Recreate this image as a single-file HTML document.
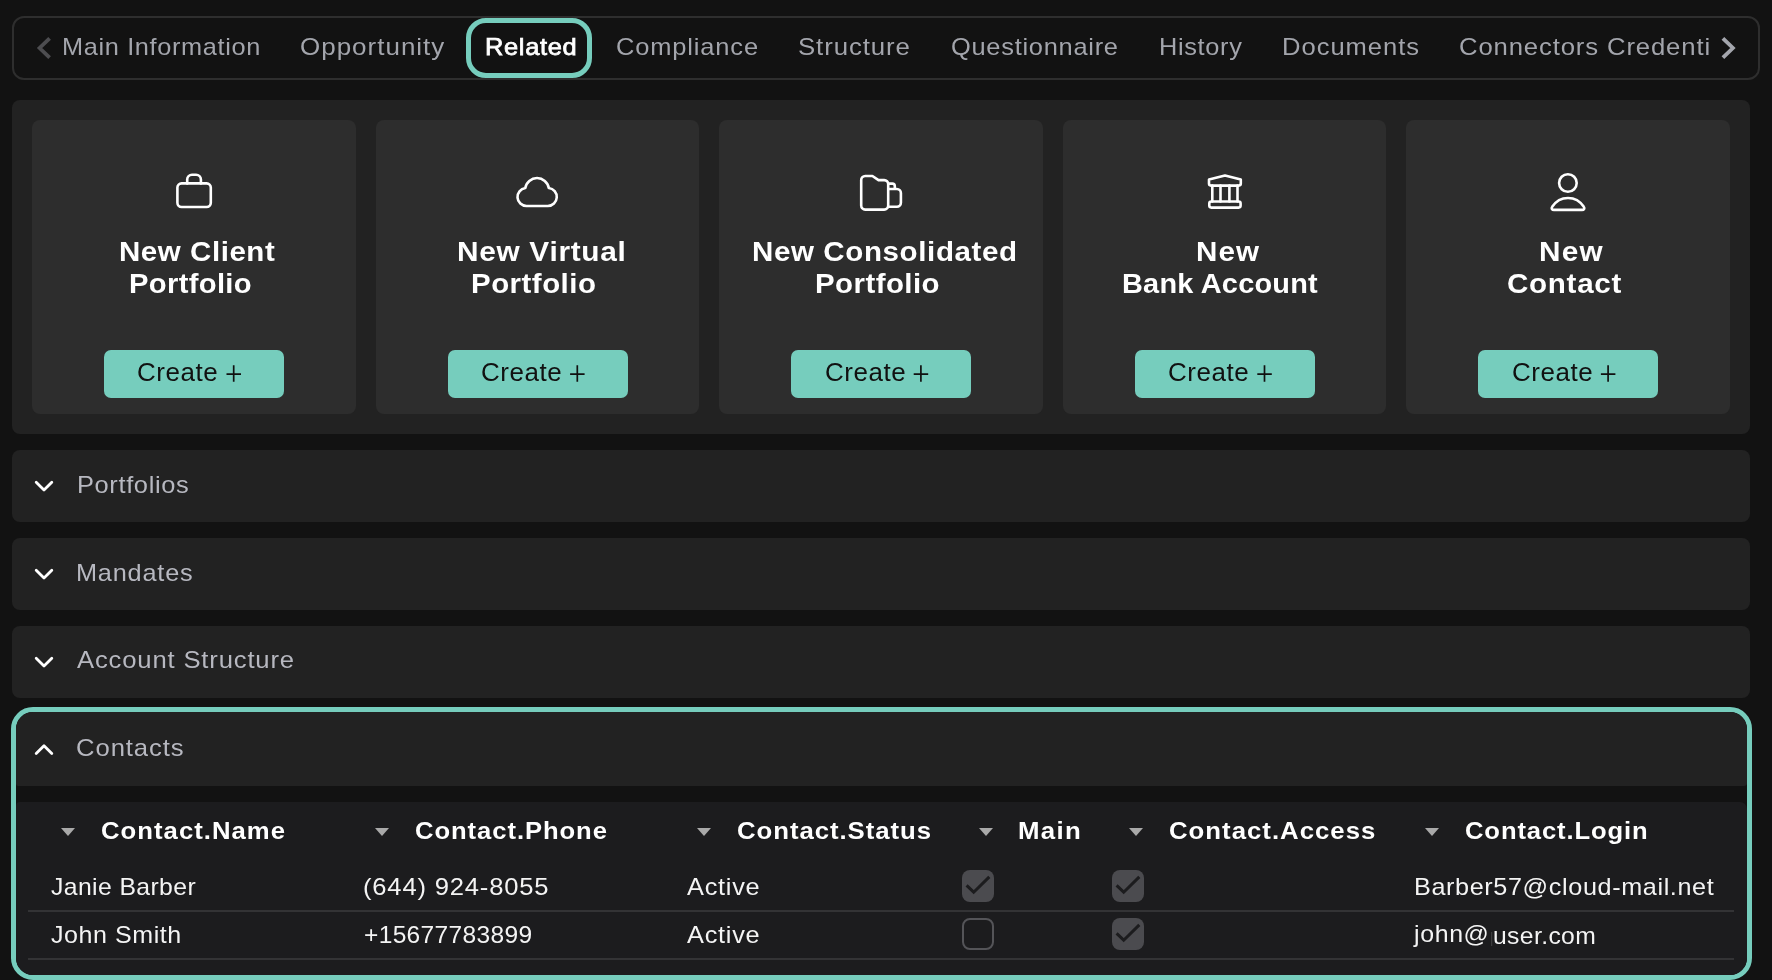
<!DOCTYPE html>
<html><head><meta charset="utf-8"><style>
html,body{margin:0;padding:0;}
body{width:1772px;height:980px;overflow:hidden;position:relative;background:#121212;font-family:"Liberation Sans",sans-serif;}
.a{position:absolute;box-sizing:border-box;}
.t{position:absolute;white-space:pre;will-change:transform;transform-origin:0 0;}
</style></head><body>
<div class="a" style="left:12px;top:16px;width:1748px;height:64px;border:2px solid #2e2e2e;border-radius:12px;"></div>
<div class="a" style="left:466px;top:18px;width:126px;height:60px;border:5px solid #76cdbd;border-radius:20px;"></div>
<div class="a" style="left:12px;top:100px;width:1738px;height:334px;background:#222222;border-radius:8px;"></div>
<div class="a" style="left:32.0px;top:120px;width:323.6px;height:294px;background:#2d2d2d;border-radius:8px;"></div>
<div class="a" style="left:104.0px;top:350px;width:180px;height:48px;background:#76cdbd;border-radius:7px;"></div>
<div class="a" style="left:375.6px;top:120px;width:323.6px;height:294px;background:#2d2d2d;border-radius:8px;"></div>
<div class="a" style="left:447.6px;top:350px;width:180px;height:48px;background:#76cdbd;border-radius:7px;"></div>
<div class="a" style="left:719.2px;top:120px;width:323.6px;height:294px;background:#2d2d2d;border-radius:8px;"></div>
<div class="a" style="left:791.2px;top:350px;width:180px;height:48px;background:#76cdbd;border-radius:7px;"></div>
<div class="a" style="left:1062.8px;top:120px;width:323.6px;height:294px;background:#2d2d2d;border-radius:8px;"></div>
<div class="a" style="left:1134.8px;top:350px;width:180px;height:48px;background:#76cdbd;border-radius:7px;"></div>
<div class="a" style="left:1406.4px;top:120px;width:323.6px;height:294px;background:#2d2d2d;border-radius:8px;"></div>
<div class="a" style="left:1478.4px;top:350px;width:180px;height:48px;background:#76cdbd;border-radius:7px;"></div>
<div class="a" style="left:12px;top:450px;width:1738px;height:72px;background:#222222;border-radius:8px;"></div>
<div class="a" style="left:12px;top:538px;width:1738px;height:72px;background:#222222;border-radius:8px;"></div>
<div class="a" style="left:12px;top:626px;width:1738px;height:72px;background:#222222;border-radius:8px;"></div>
<div class="a" style="left:11px;top:707px;width:1741px;height:273px;border:5px solid #76cdbd;border-radius:22px;background:#121212;overflow:hidden;"><div class="a" style="left:0;top:0;width:1731px;height:74px;background:#222222;border-radius:0 0 3px 2px;"></div><div class="a" style="left:0;top:90px;width:1731px;height:200px;background:#1c1c1e;border-radius:4px 7px 4px 4px;"></div></div>
<div class="a" style="left:28px;top:910px;width:1706px;height:2px;background:#333335;"></div>
<div class="a" style="left:28px;top:958px;width:1706px;height:2px;background:#333335;"></div>
<div class="a" style="left:962px;top:870px;width:32px;height:32px;background:#4b4b4f;border-radius:8px;"></div>
<div class="a" style="left:1112px;top:870px;width:32px;height:32px;background:#4b4b4f;border-radius:8px;"></div>
<div class="a" style="left:962px;top:918px;width:32px;height:32px;border:2px solid #545458;border-radius:8px;"></div>
<div class="a" style="left:1112px;top:918px;width:32px;height:32px;background:#4b4b4f;border-radius:8px;"></div>
<svg class="a" style="left:0;top:0" width="1772" height="980" viewBox="0 0 1772 980"><path d="M49.6 38.3 L39.6 48 L49.6 57.7" stroke="#4d4d50" stroke-width="3.8" fill="none"/><path d="M1722.9 38.3 L1732.9 48 L1722.9 57.7" stroke="#a4a6ad" stroke-width="3.8" fill="none"/><g transform="translate(166,165)" stroke="#ffffff" stroke-width="2.6" fill="none" stroke-linejoin="round" stroke-linecap="round"><rect x="11.4" y="18.4" width="33.4" height="23.6" rx="4.2"/><path d="M21.2 18.4 V14.5 A4.8 4.8 0 0 1 26 9.7 H30.1 A4.8 4.8 0 0 1 34.9 14.5 V18.4"/></g><g transform="translate(510,165)" stroke="#ffffff" stroke-width="2.6" fill="none" stroke-linejoin="round" stroke-linecap="round"><path d="M16.5 41 H37.8 A9 9 0 0 0 38.8 23.06 A11.9 11.9 0 0 0 15.3 23.08 A9 9 0 0 0 16.5 41 Z"/></g><g transform="translate(853,165)" stroke="#ffffff" stroke-width="2.6" fill="none" stroke-linejoin="round" stroke-linecap="round"><path d="M12.2 11 H19.4 L25.5 15.1 H31.2 A4 4 0 0 1 35.2 19.1 V40.6 A4 4 0 0 1 31.2 44.6 H12.2 A4 4 0 0 1 8.2 40.6 V15 A4 4 0 0 1 12.2 11 Z"/><path d="M35.2 18.6 H39.3 A2.5 2.5 0 0 1 41.8 21.1 V24 M35.2 24 H43.9 A4 4 0 0 1 47.9 28 V37.8 A4 4 0 0 1 43.9 41.8 H35.2"/></g><g transform="translate(1197,165)" stroke="#ffffff" stroke-width="2.6" fill="none" stroke-linejoin="round" stroke-linecap="round"><path d="M12 14.6 L28 10.6 L43.8 14.6 V18.6 A2 2 0 0 1 41.8 20.6 H14 A2 2 0 0 1 12 18.6 Z"/><path d="M15.3 20.6 V36.5 M23.5 20.6 V36.5 M32.4 20.6 V36.5 M40.5 20.6 V36.5"/><rect x="12.3" y="36.5" width="31.3" height="6.1" rx="2"/></g><g transform="translate(1540,165)" stroke="#ffffff" stroke-width="2.6" fill="none" stroke-linejoin="round" stroke-linecap="round"><circle cx="27.9" cy="18" r="8.8"/><path d="M14 44.9 H42 C44 44.9 45 43.5 43.8 41.8 C40 36 34.5 33 28 33 C21.5 33 16 36 12.2 41.8 C11 43.5 12 44.9 14 44.9 Z"/></g><path d="M36.2 482.2 L44 490.0 L51.8 482.2" stroke="#ffffff" stroke-width="2.8" fill="none" stroke-linecap="round" stroke-linejoin="round"/><path d="M36.2 570.2 L44 578.0 L51.8 570.2" stroke="#ffffff" stroke-width="2.8" fill="none" stroke-linecap="round" stroke-linejoin="round"/><path d="M36.2 658.2 L44 666.0 L51.8 658.2" stroke="#ffffff" stroke-width="2.8" fill="none" stroke-linecap="round" stroke-linejoin="round"/><path d="M36.2 753.6 L44 745.8 L51.8 753.6" stroke="#ffffff" stroke-width="2.8" fill="none" stroke-linecap="round" stroke-linejoin="round"/><path d="M61 828 H75 L68 836 Z" fill="#a9a9a9"/><path d="M375 828 H389 L382 836 Z" fill="#a9a9a9"/><path d="M697 828 H711 L704 836 Z" fill="#a9a9a9"/><path d="M979 828 H993 L986 836 Z" fill="#a9a9a9"/><path d="M1129 828 H1143 L1136 836 Z" fill="#a9a9a9"/><path d="M1425 828 H1439 L1432 836 Z" fill="#a9a9a9"/><path d="M966.6 885.4 L973.7 892.2 L989.3 876.9" stroke="#1c1c1e" stroke-width="3" fill="none"/><path d="M1116.6 885.4 L1123.7 892.2 L1139.3 876.9" stroke="#1c1c1e" stroke-width="3" fill="none"/><path d="M1116.6 933.4 L1123.7 940.2 L1139.3 924.9" stroke="#1c1c1e" stroke-width="3" fill="none"/><path d="M226.5 374.2 H241.0 M233.7 365.2 V381.7" stroke="#111111" stroke-width="1.7" fill="none"/><path d="M570.1 374.2 H584.6 M577.3 365.2 V381.7" stroke="#111111" stroke-width="1.7" fill="none"/><path d="M913.7 374.2 H928.2 M920.9 365.2 V381.7" stroke="#111111" stroke-width="1.7" fill="none"/><path d="M1257.3 374.2 H1271.8 M1264.5 365.2 V381.7" stroke="#111111" stroke-width="1.7" fill="none"/><path d="M1600.9 374.2 H1615.4 M1608.1 365.2 V381.7" stroke="#111111" stroke-width="1.7" fill="none"/><path d="M1491.7 932 V946" stroke="#444446" stroke-width="1"/></svg>
<div class="t" style="left:62.1px;top:34.8px;font-size:24px;line-height:24px;font-weight:400;color:#a3a5ac;letter-spacing:0.61px;transform:scaleX(1.0550)">Main Information</div>
<div class="t" style="left:299.6px;top:34.8px;font-size:24px;line-height:24px;font-weight:400;color:#a3a5ac;letter-spacing:0.93px;transform:scaleX(1.0822)">Opportunity</div>
<div class="t" style="left:484.7px;top:34.8px;font-size:24px;line-height:24px;font-weight:400;color:#ffffff;letter-spacing:0.64px;transform:scaleX(1.0599);-webkit-text-stroke:0.75px #ffffff">Related</div>
<div class="t" style="left:615.9px;top:34.8px;font-size:24px;line-height:24px;font-weight:400;color:#a3a5ac;letter-spacing:0.80px;transform:scaleX(1.0607)">Compliance</div>
<div class="t" style="left:798.4px;top:34.8px;font-size:24px;line-height:24px;font-weight:400;color:#a3a5ac;letter-spacing:0.84px;transform:scaleX(1.0754)">Structure</div>
<div class="t" style="left:950.6px;top:34.8px;font-size:24px;line-height:24px;font-weight:400;color:#a3a5ac;letter-spacing:0.69px;transform:scaleX(1.0588)">Questionnaire</div>
<div class="t" style="left:1158.5px;top:34.8px;font-size:24px;line-height:24px;font-weight:400;color:#a3a5ac;letter-spacing:0.64px;transform:scaleX(1.0552)">History</div>
<div class="t" style="left:1281.6px;top:34.8px;font-size:24px;line-height:24px;font-weight:400;color:#a3a5ac;letter-spacing:0.92px;transform:scaleX(1.0649)">Documents</div>
<div class="t" style="left:1459.1px;top:34.8px;font-size:24px;line-height:24px;font-weight:400;color:#a3a5ac;letter-spacing:0.80px;transform:scaleX(1.0708)">Connectors Credenti</div>
<div class="t" style="left:118.9px;top:237.1px;font-size:28.5px;line-height:28.5px;font-weight:700;color:#ffffff;letter-spacing:0.54px;transform:scaleX(1.0344)">New Client</div>
<div class="t" style="left:128.8px;top:268.8px;font-size:28.5px;line-height:28.5px;font-weight:700;color:#ffffff;letter-spacing:0.33px;transform:scaleX(1.0236)">Portfolio</div>
<div class="t" style="left:457.0px;top:237.1px;font-size:28.5px;line-height:28.5px;font-weight:700;color:#ffffff;letter-spacing:0.67px;transform:scaleX(1.0459)">New Virtual</div>
<div class="t" style="left:470.8px;top:268.8px;font-size:28.5px;line-height:28.5px;font-weight:700;color:#ffffff;letter-spacing:0.47px;transform:scaleX(1.0335)">Portfolio</div>
<div class="t" style="left:752.2px;top:237.1px;font-size:28.5px;line-height:28.5px;font-weight:700;color:#ffffff;letter-spacing:0.58px;transform:scaleX(1.0366)">New Consolidated</div>
<div class="t" style="left:814.8px;top:268.8px;font-size:28.5px;line-height:28.5px;font-weight:700;color:#ffffff;letter-spacing:0.45px;transform:scaleX(1.0318)">Portfolio</div>
<div class="t" style="left:1195.6px;top:237.1px;font-size:28.5px;line-height:28.5px;font-weight:700;color:#ffffff;letter-spacing:1.08px;transform:scaleX(1.0382)">New</div>
<div class="t" style="left:1121.6px;top:268.8px;font-size:28.5px;line-height:28.5px;font-weight:700;color:#ffffff;letter-spacing:0.23px;transform:scaleX(1.0136)">Bank Account</div>
<div class="t" style="left:1538.9px;top:237.1px;font-size:28.5px;line-height:28.5px;font-weight:700;color:#ffffff;letter-spacing:1.21px;transform:scaleX(1.0434)">New</div>
<div class="t" style="left:1506.6px;top:268.8px;font-size:28.5px;line-height:28.5px;font-weight:700;color:#ffffff;letter-spacing:0.66px;transform:scaleX(1.0389)">Contact</div>
<div class="t" style="left:137.3px;top:359.9px;font-size:25px;line-height:25px;font-weight:400;color:#111111;letter-spacing:0.54px;transform:scaleX(1.0381)">Create</div>
<div class="t" style="left:480.9px;top:359.9px;font-size:25px;line-height:25px;font-weight:400;color:#111111;letter-spacing:0.54px;transform:scaleX(1.0381)">Create</div>
<div class="t" style="left:824.5px;top:359.9px;font-size:25px;line-height:25px;font-weight:400;color:#111111;letter-spacing:0.54px;transform:scaleX(1.0381)">Create</div>
<div class="t" style="left:1168.1px;top:359.9px;font-size:25px;line-height:25px;font-weight:400;color:#111111;letter-spacing:0.54px;transform:scaleX(1.0381)">Create</div>
<div class="t" style="left:1511.7px;top:359.9px;font-size:25px;line-height:25px;font-weight:400;color:#111111;letter-spacing:0.54px;transform:scaleX(1.0381)">Create</div>
<div class="t" style="left:76.6px;top:472.5px;font-size:24px;line-height:24px;font-weight:400;color:#b7b8c0;letter-spacing:0.61px;transform:scaleX(1.0583)">Portfolios</div>
<div class="t" style="left:75.7px;top:560.9px;font-size:24px;line-height:24px;font-weight:400;color:#b7b8c0;letter-spacing:0.76px;transform:scaleX(1.0536)">Mandates</div>
<div class="t" style="left:76.8px;top:648.4px;font-size:24px;line-height:24px;font-weight:400;color:#b7b8c0;letter-spacing:0.77px;transform:scaleX(1.0688)">Account Structure</div>
<div class="t" style="left:75.7px;top:736.0px;font-size:24px;line-height:24px;font-weight:400;color:#b7b8c0;letter-spacing:0.86px;transform:scaleX(1.0688)">Contacts</div>
<div class="t" style="left:100.8px;top:818.5px;font-size:24px;line-height:24px;font-weight:700;color:#ffffff;letter-spacing:0.96px;transform:scaleX(1.0701)">Contact.Name</div>
<div class="t" style="left:414.8px;top:818.5px;font-size:24px;line-height:24px;font-weight:700;color:#ffffff;letter-spacing:0.88px;transform:scaleX(1.0669)">Contact.Phone</div>
<div class="t" style="left:736.9px;top:818.5px;font-size:24px;line-height:24px;font-weight:700;color:#ffffff;letter-spacing:0.88px;transform:scaleX(1.0728)">Contact.Status</div>
<div class="t" style="left:1017.9px;top:818.5px;font-size:24px;line-height:24px;font-weight:700;color:#ffffff;letter-spacing:1.24px;transform:scaleX(1.0754)">Main</div>
<div class="t" style="left:1168.5px;top:818.5px;font-size:24px;line-height:24px;font-weight:700;color:#ffffff;letter-spacing:0.94px;transform:scaleX(1.0731)">Contact.Access</div>
<div class="t" style="left:1464.6px;top:818.5px;font-size:24px;line-height:24px;font-weight:700;color:#ffffff;letter-spacing:0.83px;transform:scaleX(1.0665)">Contact.Login</div>
<div class="t" style="left:50.9px;top:874.7px;font-size:24px;line-height:24px;font-weight:400;color:#f4f4f4;letter-spacing:0.38px;transform:scaleX(1.0313)">Janie Barber</div>
<div class="t" style="left:363.1px;top:874.7px;font-size:24px;line-height:24px;font-weight:400;color:#f4f4f4;letter-spacing:0.77px;transform:scaleX(1.0652)">(644) 924-8055</div>
<div class="t" style="left:686.8px;top:874.7px;font-size:24px;line-height:24px;font-weight:400;color:#f4f4f4;letter-spacing:0.69px;transform:scaleX(1.0561)">Active</div>
<div class="t" style="left:1414.3px;top:874.7px;font-size:24px;line-height:24px;font-weight:400;color:#f4f4f4;letter-spacing:0.59px;transform:scaleX(1.0500)">Barber57@cloud-mail.net</div>
<div class="t" style="left:50.9px;top:922.8px;font-size:24px;line-height:24px;font-weight:400;color:#f4f4f4;letter-spacing:0.54px;transform:scaleX(1.0425)">John Smith</div>
<div class="t" style="left:363.8px;top:922.8px;font-size:24px;line-height:24px;font-weight:400;color:#f4f4f4;letter-spacing:0.32px;transform:scaleX(1.0226)">+15677783899</div>
<div class="t" style="left:686.8px;top:922.8px;font-size:24px;line-height:24px;font-weight:400;color:#f4f4f4;letter-spacing:0.69px;transform:scaleX(1.0561)">Active</div>
<div class="t" style="left:1414.4px;top:922.2px;font-size:24px;line-height:24px;font-weight:400;color:#f4f4f4;letter-spacing:0.62px;transform:scaleX(1.0369)">john@</div>
<div class="t" style="left:1493.0px;top:924.1px;font-size:24px;line-height:24px;font-weight:400;color:#f4f4f4;letter-spacing:0.37px;transform:scaleX(1.0279)">user.com</div>
</body></html>
